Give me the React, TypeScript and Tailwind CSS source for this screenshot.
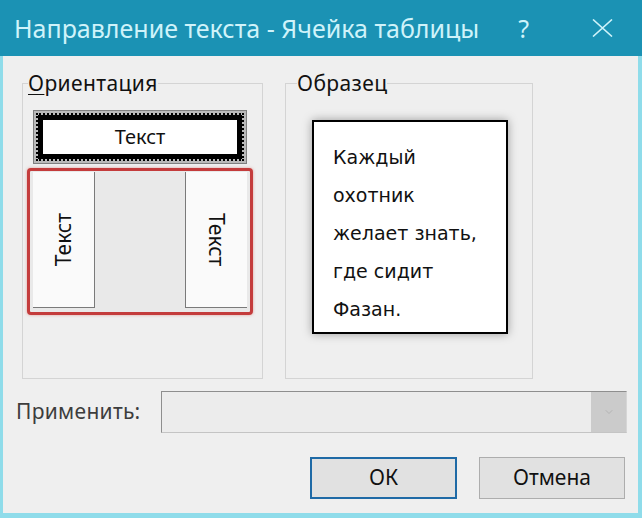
import { ChevronDown } from 'lucide-react'

const ui = { fontFamily: '"Noto Sans", "Open Sans", sans-serif' }
const sample = { fontFamily: '"DejaVu Sans", Verdana, sans-serif' }

function TitleBar() {
  return (
    <div className="flex h-[56px] shrink-0 items-center bg-[#1b92b4] pl-[14px] pr-[29px] text-[#cff3fa]">
      <span className="text-[25px] leading-none">Направление текста - Ячейка таблицы</span>
      <span className="ml-auto text-[25px] leading-none">?</span>
      <svg className="ml-[63px]" width="21" height="18" viewBox="0 0 21 18">
        <path d="M1 0.5 L20 17.5 M20 0.5 L1 17.5" stroke="currentColor" strokeWidth="1.6" fill="none" />
      </svg>
    </div>
  )
}

function Orientation() {
  return (
    <fieldset className="h-[309px] w-[241px] border border-[#d4d4d4]">
      <legend className="ml-[5px] px-0 text-[21px] leading-[26px] tracking-[0.4px] text-[#111]">
        <span className="underline decoration-1 underline-offset-[3px]">О</span>риентация
      </legend>
      <div className="flex flex-col">
        {/* selected: horizontal */}
        <div className="ml-[10px] mt-[14px] h-[54px] w-[214px] border border-[#7f7f7f] bg-[#b9b9b9] p-[4px]">
          <div className="flex h-full items-center justify-center border-[5px] border-black bg-white text-[20px] text-[#111] outline-2 outline-dotted outline-black">
            Текст
          </div>
        </div>
        {/* vertical options */}
        <div className="ml-[4px] mt-[4px] flex h-[147px] w-[226px] justify-between rounded-[4px] border-[3px] border-[#c43c3c] bg-[#e9e9e9] px-[3px] pt-[1px] pb-[4px] shadow-[0_0_3px_rgba(210,80,70,0.5)]">
          <div className="flex w-[62px] items-center justify-center border-r border-b border-[#7a7a7a] bg-[#fafafa] text-[21px] text-[#111]">
            <span className="rotate-180 [writing-mode:vertical-rl]">Текст</span>
          </div>
          <div className="flex w-[62px] items-center justify-center border-l border-b border-[#7a7a7a] bg-[#fafafa] text-[21px] text-[#111]">
            <span className="[writing-mode:vertical-rl]">Текст</span>
          </div>
        </div>
      </div>
    </fieldset>
  )
}

function Sample() {
  return (
    <fieldset className="h-[309px] w-[248px] border border-[#d4d4d4]">
      <legend className="ml-[11px] px-0 text-[21px] leading-[26px] tracking-[0.4px] text-[#111]">Образец</legend>
      <div
        style={sample}
        className="ml-[26px] mt-[24px] h-[214px] w-[196px] border-2 border-black bg-white pl-[19px] pt-[16px] text-[19px] leading-[38px] text-[#111] shadow-[0_0_9px_rgba(0,0,0,0.35)]"
      >
        <div>Каждый</div>
        <div>охотник</div>
        <div>желает знать,</div>
        <div>где сидит</div>
        <div>Фазан.</div>
      </div>
    </fieldset>
  )
}

export default function App() {
  return (
    <div style={ui} className="flex h-[518px] w-[642px] flex-col bg-[#8fdcea]">
      <TitleBar />
      <div className="mb-[5px] ml-[3px] mr-[4px] flex flex-1 flex-col bg-[#efefef]">
        <div className="mt-[14px] flex gap-[22px] pl-[19px]">
          <Orientation />
          <Sample />
        </div>

        <div className="mt-[12px] flex items-center pl-[13px]">
          <span className="w-[145px] text-[21px] tracking-[0.3px] text-[#3d3d3d]">Применить:</span>
          <div className="flex h-[42px] w-[466px] border border-t-[#8e8e8e] border-l-[#8e8e8e] border-r-[#d6d6d6] border-b-[#c4c4c4] bg-[#ececec]">
            <div className="flex-1" />
            <div className="flex w-[35px] items-center justify-center bg-[#cbcbcb]">
              <ChevronDown size={12} className="text-[#b4b4b4]" />
            </div>
          </div>
        </div>

        <div className="mt-[24px] flex justify-end gap-[22px] pr-[13px]">
          <button className="h-[42px] w-[147px] border-2 border-[#1f6aa6] bg-[#e1e1e1] text-[21px] text-[#111]">
            ОК
          </button>
          <button className="h-[42px] w-[146px] border border-[#adadad] bg-[#e1e1e1] text-[21px] text-[#111]">
            Отмена
          </button>
        </div>
      </div>
    </div>
  )
}
